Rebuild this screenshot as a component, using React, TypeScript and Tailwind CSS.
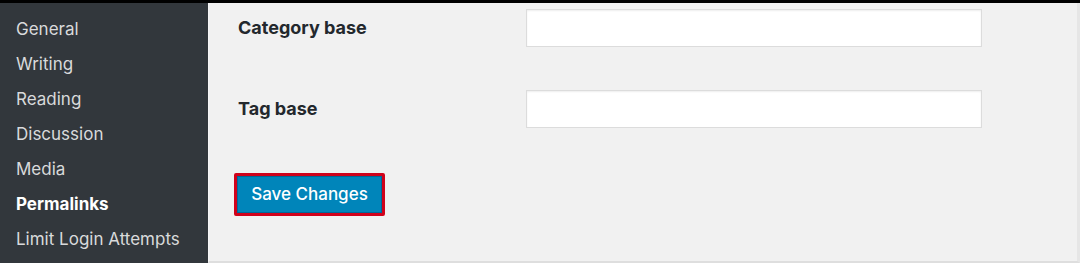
import React from "react";

const items = ["General", "Writing", "Reading", "Discussion", "Media", "Permalinks", "Limit Login Attempts"];

export default function App() {
  return (
    <div className="w-[1080px] h-[263px] flex flex-col bg-[#f1f1f1] overflow-hidden" style={{ fontFamily: "Inter, 'Liberation Sans', sans-serif" }}>
      <div className="h-[3px] bg-black shrink-0" />
      <div className="flex flex-1 min-h-0">
        <div className="w-[208px] bg-[#32373c] pt-[9px] shrink-0">
          {items.map((t) => (
            <div
              key={t}
              className={
                "h-[35px] flex items-center pl-4 text-[17px] " +
                (t === "Permalinks" ? "text-white font-bold" : "text-[#d9dadb]")
              }
            >
              {t}
            </div>
          ))}
        </div>
        <div className="flex-1 flex flex-col pl-[29px] pt-[6px] border-l border-[#f6f6f6] border-r-[3px] border-r-[#e6e6e6] border-b-[2px] border-b-[#dedede]">
          <div className="flex items-center h-[38px]">
            <div className="w-[288px] text-[18px] font-bold text-[#23282d] -mt-[2px]">Category base</div>
            <div className="w-[456px] h-[38px] bg-white border border-[#dcdcdc] shadow-[inset_0_1px_2px_rgba(0,0,0,0.07)]" />
          </div>
          <div className="flex items-center h-[38px] mt-[43px]">
            <div className="w-[288px] text-[18px] font-bold text-[#23282d] -mt-[2px]">Tag base</div>
            <div className="w-[456px] h-[38px] bg-white border border-[#dcdcdc] shadow-[inset_0_1px_2px_rgba(0,0,0,0.07)]" />
          </div>
          <div className="mt-[45px] -ml-[4px]">
            <div className="inline-flex border-[3px] border-[#d0021b] rounded-[2px]">
              <button className="h-[37px] w-[145px] bg-[#0085ba] text-white text-[17px] font-medium flex items-center justify-center border border-[#006799]">
                Save Changes
              </button>
            </div>
          </div>
        </div>
      </div>
    </div>
  );
}
